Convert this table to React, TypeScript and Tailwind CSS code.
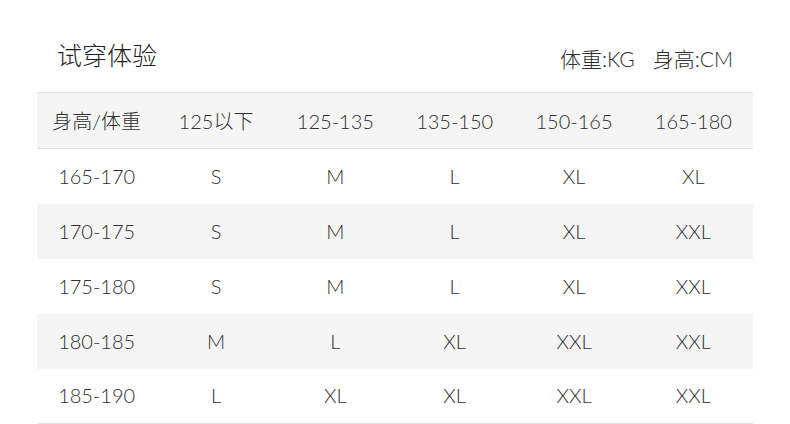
import React from "react";

const header = ["身高/体重", "125以下", "125-135", "135-150", "150-165", "165-180"];
const rows = [
  ["165-170", "S", "M", "L", "XL", "XL"],
  ["170-175", "S", "M", "L", "XL", "XXL"],
  ["175-180", "S", "M", "L", "XL", "XXL"],
  ["180-185", "M", "L", "XL", "XXL", "XXL"],
  ["185-190", "L", "XL", "XL", "XXL", "XXL"],
];

const font = { fontFamily: '"Lato", "Noto Sans CJK SC", sans-serif' };

export default function App() {
  return (
    <div className="w-[790px] h-[424px] bg-white text-[#2e2e2e]" style={font}>
      <div className="h-[92px] flex justify-between px-[57px]">
        <div className="pt-[40px] text-[25px] leading-[30px] font-light text-[#1e1e1e]">试穿体验</div>
        <div className="pt-[46px] text-[21px] leading-[26px] font-light flex gap-[18px]">
          <span>体重:KG</span>
          <span>身高:CM</span>
        </div>
      </div>
      <div className="mx-[37px]">
        <div className="grid grid-cols-6 h-[57px] bg-[#f5f5f5] border-y border-[#e3e3e3] items-center text-center text-[20px] font-light">
          {header.map((h, i) => (
            <div key={i}>{h}</div>
          ))}
        </div>
        {rows.map((r, ri) => (
          <div
            key={ri}
            className={
              "grid grid-cols-6 h-[55px] items-center text-center text-[20px] font-light pb-[2px] " +
              (ri % 2 === 1 ? "bg-[#f5f5f5]" : "bg-white") +
              (ri === rows.length - 1 ? " border-b border-[#e3e3e3]" : "")
            }
          >
            {r.map((c, ci) => (
              <div key={ci}>{c}</div>
            ))}
          </div>
        ))}
      </div>
    </div>
  );
}
